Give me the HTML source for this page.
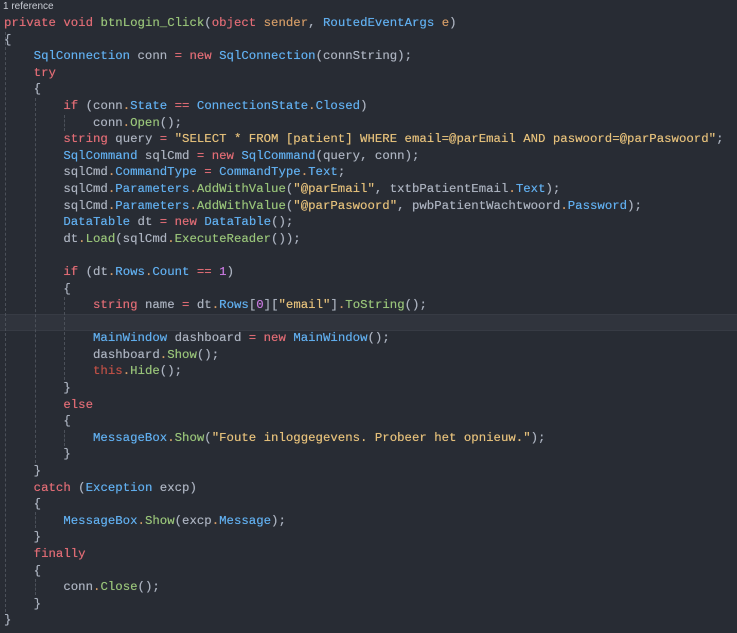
<!DOCTYPE html>
<html><head><meta charset="utf-8"><style>
html,body{margin:0;padding:0;background:#282c34;width:737px;height:633px;overflow:hidden}
#ref{position:absolute;left:3px;top:1px;font:10px "Liberation Sans",sans-serif;color:#c8ccd4}
pre{position:absolute;left:4px;top:15px;margin:0;font:12.36px/16.6px "Liberation Mono",monospace;color:#abb2bf;text-shadow:0 0 0.4px currentColor}
.k{color:#e06c75}.t{color:#61afef}.m{color:#98c379}.p{color:#d19a66}.s{color:#e5c07b}.n{color:#c678dd}.h{color:#be5046}
.g{position:absolute;border-left:1px dashed #4b5059;width:0}
#hl{position:absolute;left:0;width:737px;top:314px;height:15px;background:#30343d;border-top:1px solid #373b44;border-bottom:1px solid #373b44}
</style></head><body>
<div id="hl"></div>
<div class="g" style="left:5px;top:32px;height:580px"></div>
<div class="g" style="left:35px;top:98px;height:365px"></div>
<div class="g" style="left:35px;top:512px;height:16px"></div>
<div class="g" style="left:35px;top:579px;height:16px"></div>
<div class="g" style="left:64px;top:115px;height:16px"></div>
<div class="g" style="left:64px;top:297px;height:83px"></div>
<div class="g" style="left:64px;top:430px;height:16px"></div>
<div id="ref">1 reference</div>
<pre><span class="k">private</span> <span class="k">void</span> <span class="m">btnLogin_Click</span>(<span class="k">object</span> <span class="p">sender</span>, <span class="t">RoutedEventArgs</span> <span class="p">e</span>)
{
    <span class="t">SqlConnection</span> conn <span class="k">=</span> <span class="k">new</span> <span class="t">SqlConnection</span>(connString);
    <span class="k">try</span>
    {
        <span class="k">if</span> (conn<span class="p">.</span><span class="t">State</span> <span class="k">==</span> <span class="t">ConnectionState</span><span class="p">.</span><span class="t">Closed</span>)
            conn<span class="p">.</span><span class="m">Open</span>();
        <span class="k">string</span> query <span class="k">=</span> <span class="s">"SELECT * FROM [patient] WHERE email=@parEmail AND paswoord=@parPaswoord"</span>;
        <span class="t">SqlCommand</span> sqlCmd <span class="k">=</span> <span class="k">new</span> <span class="t">SqlCommand</span>(query, conn);
        sqlCmd<span class="p">.</span><span class="t">CommandType</span> <span class="k">=</span> <span class="t">CommandType</span><span class="p">.</span><span class="t">Text</span>;
        sqlCmd<span class="p">.</span><span class="t">Parameters</span><span class="p">.</span><span class="m">AddWithValue</span>(<span class="s">"@parEmail"</span>, txtbPatientEmail<span class="p">.</span><span class="t">Text</span>);
        sqlCmd<span class="p">.</span><span class="t">Parameters</span><span class="p">.</span><span class="m">AddWithValue</span>(<span class="s">"@parPaswoord"</span>, pwbPatientWachtwoord<span class="p">.</span><span class="t">Password</span>);
        <span class="t">DataTable</span> dt <span class="k">=</span> <span class="k">new</span> <span class="t">DataTable</span>();
        dt<span class="p">.</span><span class="m">Load</span>(sqlCmd<span class="p">.</span><span class="m">ExecuteReader</span>());

        <span class="k">if</span> (dt<span class="p">.</span><span class="t">Rows</span><span class="p">.</span><span class="t">Count</span> <span class="k">==</span> <span class="n">1</span>)
        {
            <span class="k">string</span> name <span class="k">=</span> dt<span class="p">.</span><span class="t">Rows</span>[<span class="n">0</span>][<span class="s">"email"</span>]<span class="p">.</span><span class="m">ToString</span>();

            <span class="t">MainWindow</span> dashboard <span class="k">=</span> <span class="k">new</span> <span class="t">MainWindow</span>();
            dashboard<span class="p">.</span><span class="m">Show</span>();
            <span class="h">this</span><span class="p">.</span><span class="m">Hide</span>();
        }
        <span class="k">else</span>
        {
            <span class="t">MessageBox</span><span class="p">.</span><span class="m">Show</span>(<span class="s">"Foute inloggegevens. Probeer het opnieuw."</span>);
        }
    }
    <span class="k">catch</span> (<span class="t">Exception</span> excp)
    {
        <span class="t">MessageBox</span><span class="p">.</span><span class="m">Show</span>(excp<span class="p">.</span><span class="t">Message</span>);
    }
    <span class="k">finally</span>
    {
        conn<span class="p">.</span><span class="m">Close</span>();
    }
}</pre>
</body></html>
